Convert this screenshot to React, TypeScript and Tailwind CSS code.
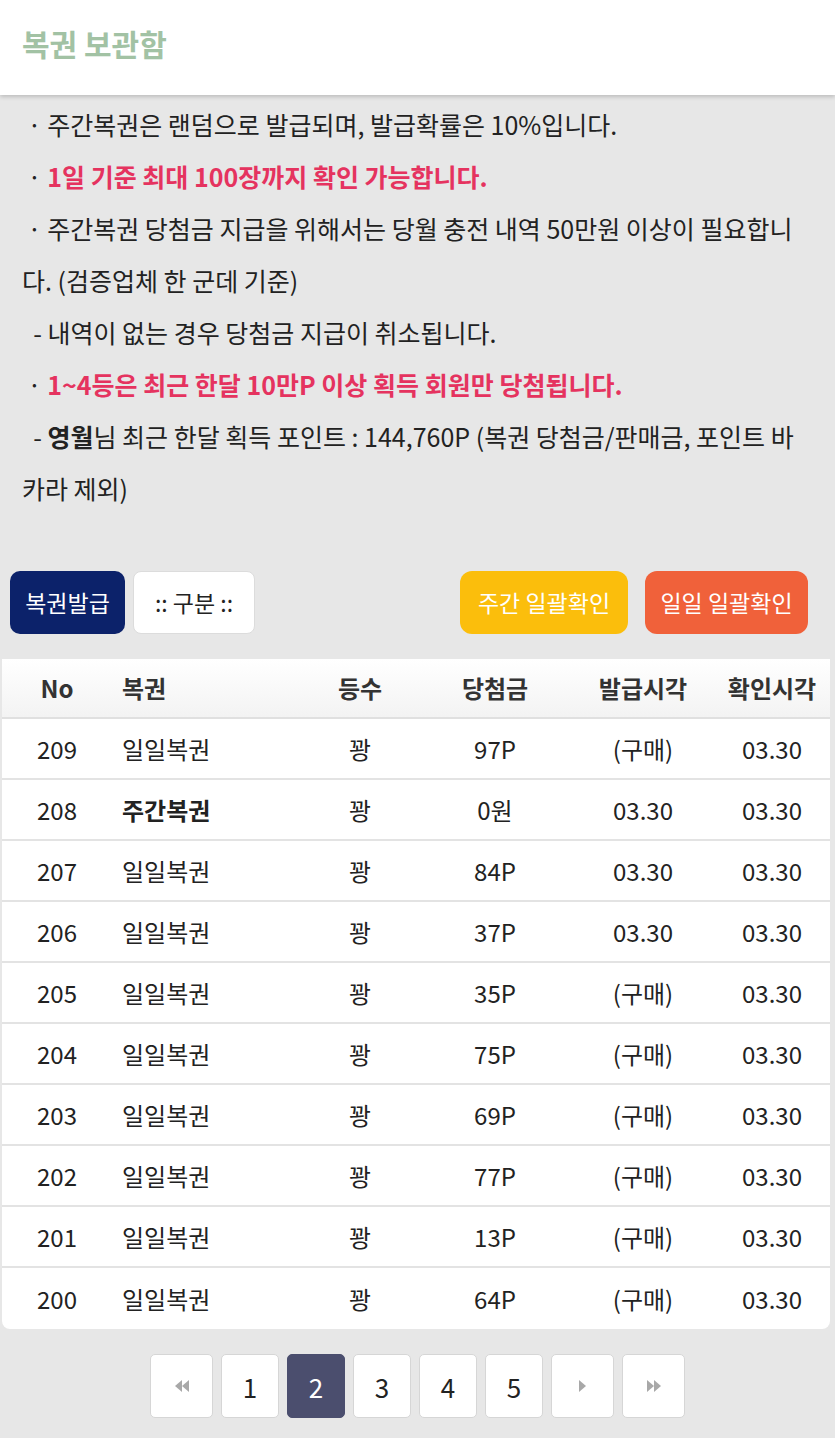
import React from "react";

const FONT = '"Noto Sans CJK KR", "Noto Sans", sans-serif';

interface Row {
  no: number;
  name: string;
  bold?: boolean;
  rank: string;
  prize: string;
  issued: string;
  checked: string;
}

const rows: Row[] = [
  { no: 209, name: "일일복권", rank: "꽝", prize: "97P", issued: "(구매)", checked: "03.30" },
  { no: 208, name: "주간복권", bold: true, rank: "꽝", prize: "0원", issued: "03.30", checked: "03.30" },
  { no: 207, name: "일일복권", rank: "꽝", prize: "84P", issued: "03.30", checked: "03.30" },
  { no: 206, name: "일일복권", rank: "꽝", prize: "37P", issued: "03.30", checked: "03.30" },
  { no: 205, name: "일일복권", rank: "꽝", prize: "35P", issued: "(구매)", checked: "03.30" },
  { no: 204, name: "일일복권", rank: "꽝", prize: "75P", issued: "(구매)", checked: "03.30" },
  { no: 203, name: "일일복권", rank: "꽝", prize: "69P", issued: "(구매)", checked: "03.30" },
  { no: 202, name: "일일복권", rank: "꽝", prize: "77P", issued: "(구매)", checked: "03.30" },
  { no: 201, name: "일일복권", rank: "꽝", prize: "13P", issued: "(구매)", checked: "03.30" },
  { no: 200, name: "일일복권", rank: "꽝", prize: "64P", issued: "(구매)", checked: "03.30" },
];

const cols = "grid grid-cols-[110px_190px_116px_154px_142px_116px] items-center";

function PageBox({ children, active, wide }: { children: React.ReactNode; active?: boolean; wide?: boolean }) {
  return (
    <div
      className={
        "flex h-[64px] items-center justify-center rounded-[5px] border text-[26px] " +
        (wide ? "w-[63px] " : "w-[58px] ") +
        (active ? "border-[#4b4e6e] bg-[#4b4e6e] text-white" : "border-[#d6d6d6] bg-white text-[#222]")
      }
    >
      {children}
    </div>
  );
}

function Tri({ count }: { count: number }) {
  return (
    <svg width={count * 7} height="14" viewBox={`0 0 ${count * 7} 14`} fill="#a8a8a8">
      {Array.from({ length: count }).map((_, i) => (
        <path key={i} d={`M${i * 7} 1 L${i * 7 + 7} 7 L${i * 7} 13 Z`} />
      ))}
    </svg>
  );
}

export default function App() {
  return (
    <div className="min-h-[1438px] bg-[#e7e7e7] text-[#222]" style={{ fontFamily: FONT }}>
      <header className="relative z-10 flex h-[95px] items-start bg-white px-[22px] pt-[22px] shadow-[0_2px_4px_rgba(0,0,0,0.18)]">
        <h1 className="text-[30px] font-bold leading-[42px] text-[#a2c2a4]">복권 보관함</h1>
      </header>

      <section className="pl-[22px] pr-[28px] pt-[3px] text-[25px] leading-[52px]">
        <p>&nbsp;· 주간복권은 랜덤으로 발급되며, 발급확률은 10%입니다.</p>
        <p>
          &nbsp;· <span className="font-bold text-[#e5335f]">1일 기준 최대 100장까지 확인 가능합니다.</span>
        </p>
        <p>&nbsp;· 주간복권 당첨금 지급을 위해서는 당월 충전 내역 50만원 이상이 필요합니다. (검증업체 한 군데 기준)</p>
        <p>&nbsp; - 내역이 없는 경우 당첨금 지급이 취소됩니다.</p>
        <p>
          &nbsp;· <span className="font-bold text-[#e5335f]">1~4등은 최근 한달 10만P 이상 획득 회원만 당첨됩니다.</span>
        </p>
        <p>
          &nbsp; - <b>영월</b>님 최근 한달 획득 포인트 : 144,760P (복권 당첨금/판매금, 포인트 바카라 제외)
        </p>
      </section>

      <div className="mt-[57px] flex items-center pl-[10px] pr-[27px] text-[23px]">
        <div className="flex gap-[8px]">
          <button className="h-[63px] w-[115px] rounded-[10px] bg-[#0c226a] text-white">복권발급</button>
          <button className="h-[63px] w-[122px] rounded-[8px] border border-[#dcdcdc] bg-white text-[#222]">:: 구분 ::</button>
        </div>
        <div className="ml-auto flex gap-[17px]">
          <button className="h-[63px] w-[168px] rounded-[12px] bg-[#fbbe0c] text-white">주간 일괄확인</button>
          <button className="h-[63px] w-[163px] rounded-[12px] bg-[#f0613a] text-white">일일 일괄확인</button>
        </div>
      </div>

      <div className="ml-[2px] mt-[25px] w-[828px] overflow-hidden rounded-b-[8px] bg-white text-[24px]">
        <div className={cols + " h-[60px] border-b-2 border-[#e0e0e0] bg-gradient-to-b from-white to-[#f3f3f3] font-bold text-[#333]"}>
          <div className="text-center">No</div>
          <div className="pl-[10px]">복권</div>
          <div className="text-center">등수</div>
          <div className="text-center">당첨금</div>
          <div className="text-center">발급시각</div>
          <div className="text-center">확인시각</div>
        </div>
        {rows.map((r, i) => (
          <div
            key={r.no}
            className={cols + " h-[61px] " + (i < rows.length - 1 ? "border-b-2 border-[#e3e3e3]" : "")}
          >
            <div className="text-center">{r.no}</div>
            <div className={"pl-[10px] " + (r.bold ? "font-bold" : "")}>{r.name}</div>
            <div className="text-center">{r.rank}</div>
            <div className="text-center">{r.prize}</div>
            <div className="text-center">{r.issued}</div>
            <div className="text-center">{r.checked}</div>
          </div>
        ))}
      </div>

      <nav className="mt-[25px] flex justify-center gap-[8px]">
        <PageBox wide>
          <svg width="16" height="14" viewBox="0 0 16 14" fill="#a8a8a8">
            <path d="M8 1 L1 7 L8 13 Z" />
            <path d="M15 1 L8 7 L15 13 Z" />
          </svg>
        </PageBox>
        <PageBox>1</PageBox>
        <PageBox active>2</PageBox>
        <PageBox>3</PageBox>
        <PageBox>4</PageBox>
        <PageBox>5</PageBox>
        <PageBox wide>
          <Tri count={1} />
        </PageBox>
        <PageBox wide>
          <Tri count={2} />
        </PageBox>
      </nav>
    </div>
  );
}
